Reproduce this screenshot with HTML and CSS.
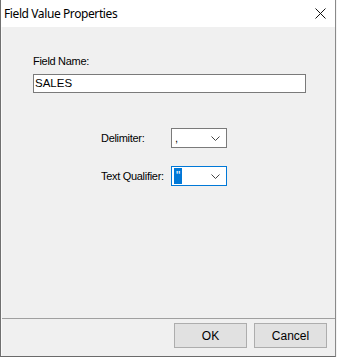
FILE: index.html
```html
<!DOCTYPE html>
<html>
<head>
<meta charset="utf-8">
<link rel="stylesheet" href="styles.css">
</head>
<body>
<div class="window">
  <div class="titlebar">
    <span class="title">Field Value Properties</span>
    <svg class="close" width="11" height="11" viewBox="0 0 11 11"><path d="M0.5 0.5 L10.5 10.5 M10.5 0.5 L0.5 10.5" stroke="#111" stroke-width="1" fill="none"/></svg>
  </div>
  <div class="client">
    <div class="form">
      <div class="label">Field Name:</div>
      <div class="textbox">SALES</div>
      <div class="fields">
        <div class="lbl">Delimiter:</div>
        <div class="combo"><span class="val">,</span><svg class="chev" width="9" height="5" viewBox="0 0 9 5"><path d="M0.5 0.5 L4.5 4.5 L8.5 0.5" stroke="#444" fill="none"/></svg></div>
        <div class="lbl">Text Qualifier:</div>
        <div class="combo focus"><span class="val sel">"</span><svg class="chev" width="9" height="5" viewBox="0 0 9 5"><path d="M0.5 0.5 L4.5 4.5 L8.5 0.5" stroke="#444" fill="none"/></svg></div>
      </div>
    </div>
    <div class="footer">
      <div class="btn">OK</div>
      <div class="btn">Cancel</div>
    </div>
  </div>
</div>
</body>
</html>
```

FILE: styles.css
```css
html, body {
  margin: 0;
  padding: 0;
  background: #f4f4f4;
}
body {
  width: 337px;
  height: 357px;
  overflow: hidden;
  font-family: "Liberation Sans", Arial, sans-serif;
  font-size: 11px;
  color: #000;
}
.window {
  width: 336px;
  height: 357px;
  box-sizing: border-box;
  border-left: 1px solid #707070;
  border-right: 1px solid #8a8a8a;
  border-bottom: 1px solid #6a6a6a;
  display: flex;
  flex-direction: column;
}
.titlebar {
  height: 27px;
  background: #fff;
  display: flex;
  align-items: center;
  justify-content: space-between;
  padding: 0 9px 0 3px;
  flex: none;
}
.title {
  font-family: "Noto Sans", "Open Sans", sans-serif;
  font-size: 12px;
  letter-spacing: -0.4px;
  color: #000;
}
.close {
  display: block;
}
.client {
  flex: 1;
  background: #f0f0f0;
  display: flex;
  flex-direction: column;
  border-left: 1px solid #fafafa;
}
.form {
  flex: 1;
  padding: 28px 0 0 31px;
}
.label {
  line-height: 13px;
  height: 13px;
  letter-spacing: -0.3px;
}
.textbox {
  margin-top: 6px;
  width: 273px;
  height: 19px;
  box-sizing: border-box;
  border: 1px solid #7a7a7a;
  background: #fff;
  font-size: 11.5px;
  line-height: 17px;
  padding-left: 1px;
}
.fields {
  margin-top: 35px;
  display: grid;
  grid-template-columns: 138px 56px;
  grid-auto-rows: 20px;
  row-gap: 18px;
  align-items: center;
}
.lbl {
  padding-left: 68px;
  letter-spacing: -0.3px;
}
.combo {
  height: 20px;
  box-sizing: border-box;
  border: 1px solid #7a7a7a;
  background: #fff;
  display: flex;
  align-items: center;
  justify-content: space-between;
  padding: 0 6px 0 2px;
}
.combo.focus {
  border-color: #0078d7;
}
.val {
  font-size: 11px;
  line-height: 16px;
  padding: 0 1px;
}
.val.sel {
  background: #0078d7;
  color: #fff;
  font-size: 12px;
  padding: 0 2px;
}
.chev { display: block; }
.footer {
  flex: none;
  height: 38px;
  box-sizing: border-box;
  border-top: 1px solid #a0a0a0;
  display: flex;
  justify-content: flex-end;
  gap: 7px;
  padding: 4px 8px 0 0;
}
.btn {
  width: 73px;
  height: 25px;
  box-sizing: border-box;
  border: 1px solid #adadad;
  background: #e1e1e1;
  display: flex;
  align-items: center;
  justify-content: center;
  font-size: 12px;
}
```
